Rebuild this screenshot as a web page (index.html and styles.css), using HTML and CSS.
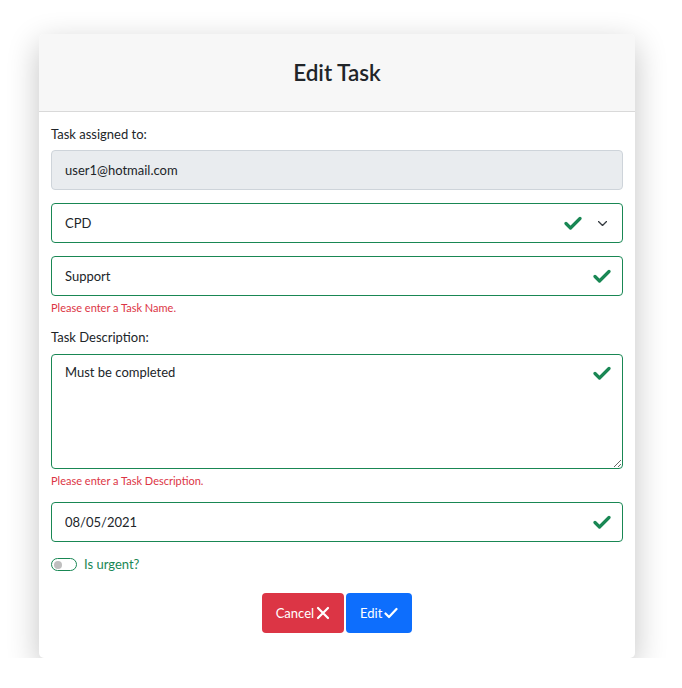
FILE: index.html
```html
<!DOCTYPE html>
<html lang="en">
<head>
<meta charset="utf-8">
<title>Edit Task</title>
<link rel="stylesheet" href="styles.css">
</head>
<body>
<div class="card">
  <div class="card-header">
    <h4 class="title">Edit Task</h4>
  </div>
  <form class="card-body">
    <label class="form-label">Task assigned to:</label>
    <input class="form-control disabled" type="text" value="user1@hotmail.com" disabled>

    <div class="field">
      <select class="form-control valid select">
        <option>CPD</option>
      </select>
      <svg class="check check-select" viewBox="0 0 18 14"><path d="M2 7.5 L6.5 12 L16 2.5" /></svg>
      <svg class="chevron" viewBox="0 0 9 5"><path d="M0.5 0.5 L4.5 4.5 L8.5 0.5" /></svg>
    </div>

    <div class="field tight">
      <input class="form-control valid" type="text" value="Support">
      <svg class="check" viewBox="0 0 18 14"><path d="M2 7.5 L6.5 12 L16 2.5" /></svg>
    </div>
    <div class="feedback">Please enter a Task Name.</div>

    <label class="form-label desc-label">Task Description:</label>
    <div class="field tight">
      <textarea class="form-control valid textarea">Must be completed</textarea>
      <svg class="check check-top" viewBox="0 0 18 14"><path d="M2 7.5 L6.5 12 L16 2.5" /></svg>
    </div>
    <div class="feedback">Please enter a Task Description.</div>

    <div class="field date-field">
      <input class="form-control valid" type="text" value="08/05/2021">
      <svg class="check" viewBox="0 0 18 14"><path d="M2 7.5 L6.5 12 L16 2.5" /></svg>
    </div>

    <div class="switch-row">
      <span class="switch"><span class="knob"></span></span>
      <span class="switch-label">Is urgent?</span>
    </div>

    <div class="actions">
      <button type="button" class="btn btn-cancel">Cancel
        <svg class="btn-icon" viewBox="0 0 14 14"><path d="M2 2 L12 12 M12 2 L2 12" /></svg>
      </button>
      <button type="button" class="btn btn-edit">Edit
        <svg class="btn-icon" viewBox="0 0 14 14"><path d="M1.5 7.5 L5 11 L12.5 3" /></svg>
      </button>
    </div>
  </form>
</div>
</body>
</html>
```

FILE: styles.css
```css
* { box-sizing: border-box; }

html, body {
  margin: 0;
  padding: 0;
  background: #ffffff;
}

body {
  font-family: Lato, "Open Sans", "Liberation Sans", sans-serif;
  color: #212529;
  font-size: 13px;
  line-height: 1.5;
}

.card {
  margin: 34px 0 0 39px;
  width: 596px;
  background: #fff;
  border-radius: 5px;
  box-shadow: 0 10px 32px rgba(0, 0, 0, 0.24);
  overflow: hidden;
}

.card-header {
  background: #f7f7f7;
  border-bottom: 1px solid #d9d9d9;
  height: 78px;
  display: flex;
  align-items: center;
  justify-content: center;
}

.title {
  margin: 0;
  font-size: 22.5px;
  font-weight: 600;
  line-height: 1.2;
  color: #212529;
}

.card-body {
  display: flex;
  flex-direction: column;
  padding: 12px 12px 25px;
}

.form-label {
  display: block;
  font-size: 13px;
  line-height: 21px;
  margin-bottom: 5px;
}

.desc-label {
  margin-top: 11px;
  margin-bottom: 6px;
}

.form-control {
  display: block;
  width: 100%;
  height: 40px;
  padding: 0 13px;
  font-family: inherit;
  font-size: 13px;
  line-height: 21px;
  color: #212529;
  background: #fff;
  border: 1px solid #ced4da;
  border-radius: 4px;
  margin: 0;
  outline: none;
}

.form-control.disabled {
  background: #e9ecef;
  margin-bottom: 13px;
}

.form-control.valid {
  border-color: #198754;
}

.select {
  appearance: none;
  -webkit-appearance: none;
}

.field {
  position: relative;
  margin-bottom: 13px;
}

.field.tight {
  margin-bottom: 0;
}

.date-field {
  margin-top: 13px;
}

.textarea {
  height: 115px;
  padding: 7px 13px;
  resize: vertical;
}

.check {
  position: absolute;
  right: 12px;
  top: 13px;
  width: 18px;
  height: 14px;
  fill: none;
  stroke: #198754;
  stroke-width: 3.2;
  stroke-linecap: round;
  stroke-linejoin: round;
}

.check-select {
  right: 41px;
}

.check-top {
  top: 12px;
}

.chevron {
  position: absolute;
  right: 16px;
  top: 18px;
  width: 9px;
  height: 5px;
  fill: none;
  stroke: #343a40;
  stroke-width: 1.3;
  stroke-linecap: round;
  stroke-linejoin: round;
}

.feedback {
  margin-top: 4px;
  font-size: 11px;
  line-height: 16px;
  color: #dc3545;
}

.switch-row {
  display: flex;
  align-items: center;
  gap: 7px;
  margin-top: 3px;
  height: 13px;
}

.switch {
  position: relative;
  width: 26px;
  height: 13px;
  border: 1px solid #198754;
  border-radius: 7px;
  background: #fff;
}

.knob {
  position: absolute;
  left: 2px;
  top: 1.5px;
  width: 8px;
  height: 8px;
  border-radius: 50%;
  background: #bfbfbf;
}

.switch-label {
  color: #198754;
  font-size: 13px;
}

.actions {
  display: flex;
  justify-content: center;
  gap: 2px;
  margin-top: 22px;
}

.btn {
  display: inline-flex;
  align-items: center;
  gap: 2px;
  height: 40px;
  padding: 0 14px;
  font-family: inherit;
  font-size: 13px;
  color: #fff;
  border: none;
  border-radius: 4px;
  cursor: pointer;
}

.btn-cancel {
  background: #dc3545;
}

.btn-edit {
  background: #0d6efd;
}

.btn-icon {
  width: 14px;
  height: 14px;
  fill: none;
  stroke: #fff;
  stroke-width: 2.2;
  stroke-linecap: round;
  stroke-linejoin: round;
}
```
